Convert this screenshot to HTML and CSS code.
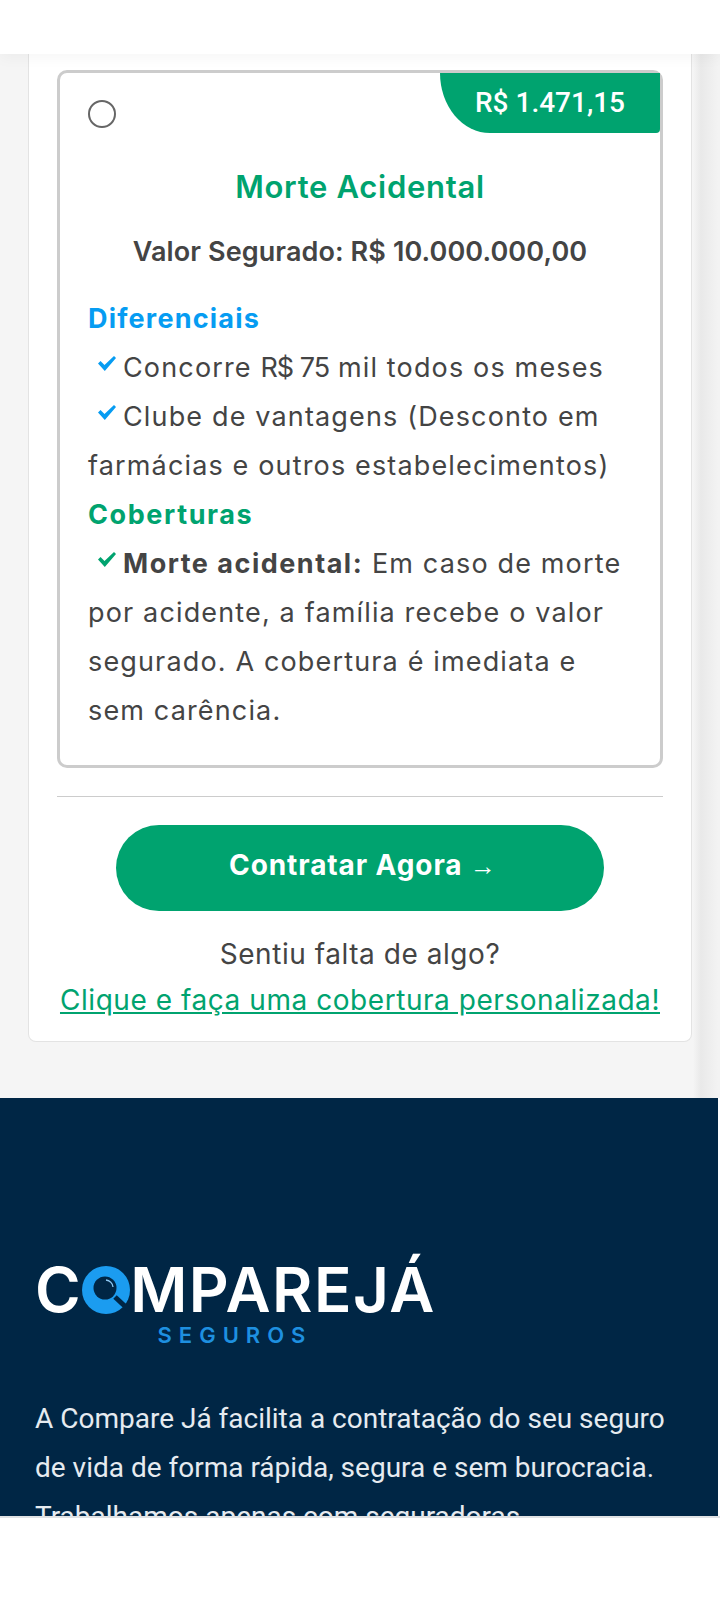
FILE: index.html
```html
<!DOCTYPE html>
<html lang="pt-br">
<head>
    <meta charset="UTF-8">
    <meta name="viewport" content="width=device-width, initial-scale=1.0">
    <title>Compare Já Seguros</title>
    <link rel="stylesheet" href="styles.css">
</head>
<body>
    <div class="top-bar"></div>

    <main class="page">
        <div class="content">
            <section class="panel">
                <label class="plan">
                    <span class="price-tag">R$ 1.471,15</span>
                    <input class="plan-radio" type="radio" name="plano">
                    <h3 class="plan-title">Morte Acidental</h3>
                    <p class="plan-value">Valor Segurado: R$ 10.000.000,00</p>

                    <h4 class="list-title blue">Diferenciais</h4>
                    <p class="item">
                        <svg class="check check-blue" viewBox="0 0 18 15"><path d="M0 7.5 L2.5 5 L6.5 9 L16 0 L18 2 L6.8 15 Z"/></svg>Concorre <span class="tight">R$ 75</span> mil todos os meses
                    </p>
                    <p class="item">
                        <svg class="check check-blue" viewBox="0 0 18 15"><path d="M0 7.5 L2.5 5 L6.5 9 L16 0 L18 2 L6.8 15 Z"/></svg>Clube de vantagens (Desconto em farmácias e outros estabelecimentos)
                    </p>

                    <h4 class="list-title green">Coberturas</h4>
                    <p class="item">
                        <svg class="check check-green" viewBox="0 0 18 15"><path d="M0 7.5 L2.5 5 L6.5 9 L16 0 L18 2 L6.8 15 Z"/></svg><strong>Morte acidental:</strong> Em caso de morte por acidente, a família recebe o valor segurado. A cobertura é imediata e sem carência.
                    </p>
                </label>

                <hr class="divider">

                <button class="cta" type="button">Contratar Agora <span class="arrow">→</span></button>
                <p class="missing">Sentiu falta de algo?</p>
                <a class="custom-link" href="#">Clique e faça uma cobertura personalizada!</a>
            </section>
        </div>

        <footer class="footer">
            <div class="logo">
                <div class="logo-name">C<svg class="logo-lens" viewBox="0 0 48 48">
                    <circle cx="24" cy="24" r="24" fill="#1b9cf0"/>
                    <path d="M33 31 L47 44" stroke="#002645" stroke-width="5"/>
                    <circle cx="23" cy="22" r="11.5" fill="#002645"/>
                    <path d="M24 14 A8 8 0 0 1 31 21" fill="none" stroke="#8cc9f5" stroke-width="1.3"/>
                </svg>MPAREJÁ</div>
                <div class="logo-sub">SEGUROS</div>
            </div>
            <p class="footer-text">A Compare Já facilita a contratação do seu seguro de vida de forma rápida, segura e sem burocracia. Trabalhamos apenas com seguradoras<br>autorizadas.</p>
        </footer>
    </main>

    <div class="bottom-bar"></div>
</body>
</html>
```

FILE: styles.css
```css
* {
    box-sizing: border-box;
}

body {
    margin: 0;
    height: 1600px;
    display: flex;
    flex-direction: column;
    overflow: hidden;
    background-color: #fff;
    font-family: Inter, "Noto Sans", Arial, sans-serif;
    color: #444;
}

.top-bar {
    position: relative;
    height: 54px;
    flex: none;
    background-color: #fff;
    box-shadow: 0 4px 14px rgba(0, 0, 0, 0.04);
}

.bottom-bar {
    height: 84px;
    flex: none;
    background-color: #fff;
    border-top: 2px solid #e0e2e4;
}

.page {
    flex: 1;
    min-height: 0;
    overflow: hidden;
}

.content {
    height: 1044px;
    padding: 0 28px;
    background-color: #f5f5f5;
    background-image: linear-gradient(to right, #f5f5f5 0, #e9e9e9 8px, #f3f3f3 25px);
    background-size: 27px 100%;
    background-position: right top;
    background-repeat: no-repeat;
}

.panel {
    height: 988px;
    width: 664px;
    padding: 16px 28px 0;
    background-color: #fff;
    border: 1px solid #e3e3e3;
    border-top: 0;
    border-radius: 0 0 8px 8px;
    text-align: center;
}

.plan {
    display: block;
    position: relative;
    height: 698px;
    padding: 27px 28px 0;
    border: 3px solid #ccc;
    border-radius: 10px;
    text-align: left;
}

.price-tag {
    position: absolute;
    top: 0;
    right: 0;
    width: 220px;
    height: 60px;
    background-color: #00a36f;
    border-bottom-right-radius: 4px;
    border-bottom-left-radius: 50px 60px;
    color: #fff;
    font-family: Roboto, sans-serif;
    font-size: 28px;
    font-weight: 500;
    line-height: 60px;
    text-align: center;
}

.plan-radio {
    appearance: none;
    display: block;
    width: 28px;
    height: 28px;
    margin: 0;
    background-color: #fff;
    border: 2px solid #666;
    border-radius: 50%;
}

.plan-title {
    margin: 37px 0 0;
    color: #00a36f;
    font-size: 31px;
    font-weight: 600;
    letter-spacing: 0.7px;
    line-height: 44px;
    text-align: center;
}

.plan-value {
    margin: 21px 0 0;
    font-size: 27px;
    font-weight: 600;
    letter-spacing: 0.1px;
    line-height: 44px;
    text-align: center;
}

.list-title {
    margin: 0;
    font-size: 27px;
    font-weight: 700;
    letter-spacing: 1.2px;
    line-height: 49px;
}

.list-title.blue {
    margin-top: 20px;
    color: #069cf2;
}

.list-title.green {
    color: #00a36f;
    letter-spacing: 1.6px;
}

.item {
    margin: 0;
    font-size: 27px;
    letter-spacing: 1.15px;
    line-height: 49px;
}

.item strong {
    font-weight: 700;
    letter-spacing: 1.5px;
}

.tight {
    letter-spacing: -1px;
}

.check {
    width: 18px;
    height: 15px;
    margin: 0 7px 0 10px;
    vertical-align: 6px;
}

.check-blue {
    fill: #069cf2;
}

.check-green {
    fill: #00a36f;
}

.divider {
    margin: 28px 0 28px;
    border: 0;
    border-top: 1px solid #ccc;
}

.cta {
    display: block;
    width: 488px;
    height: 86px;
    margin: 0 auto;
    padding: 0 0 6px 6px;
    background-color: #00a36f;
    border: 0;
    border-radius: 43px;
    color: #fff;
    font-family: inherit;
    font-size: 28px;
    font-weight: 700;
    letter-spacing: 0.9px;
}

.arrow {
    font-family: "Liberation Sans", sans-serif;
    font-size: 26px;
    font-weight: 400;
}

.missing {
    margin: 20px 0 0;
    font-size: 28px;
    letter-spacing: 0.55px;
    line-height: 46px;
}

.custom-link {
    display: block;
    color: #00a36f;
    font-size: 28px;
    letter-spacing: 0.55px;
    line-height: 46px;
    text-decoration: underline;
}

.footer {
    height: 500px;
    width: 718px;
    padding: 161px 35px 0;
    background-color: #002645;
}

.logo {
    width: 400px;
    text-align: center;
}

.logo-name {
    display: flex;
    align-items: center;
    color: #fff;
    font-family: Inter, sans-serif;
    font-size: 62px;
    font-weight: 600;
    letter-spacing: 1.5px;
    line-height: 62px;
}

.logo-lens {
    width: 48px;
    height: 48px;
    flex: none;
}

.logo-sub {
    margin-top: 1px;
    color: #1e90e0;
    font-size: 22px;
    font-weight: 600;
    letter-spacing: 7px;
    line-height: 26px;
}

.footer-text {
    margin: 46px 0 0;
    color: #e6ebf0;
    font-family: Roboto, sans-serif;
    font-size: 28px;
    line-height: 49px;
}
```
